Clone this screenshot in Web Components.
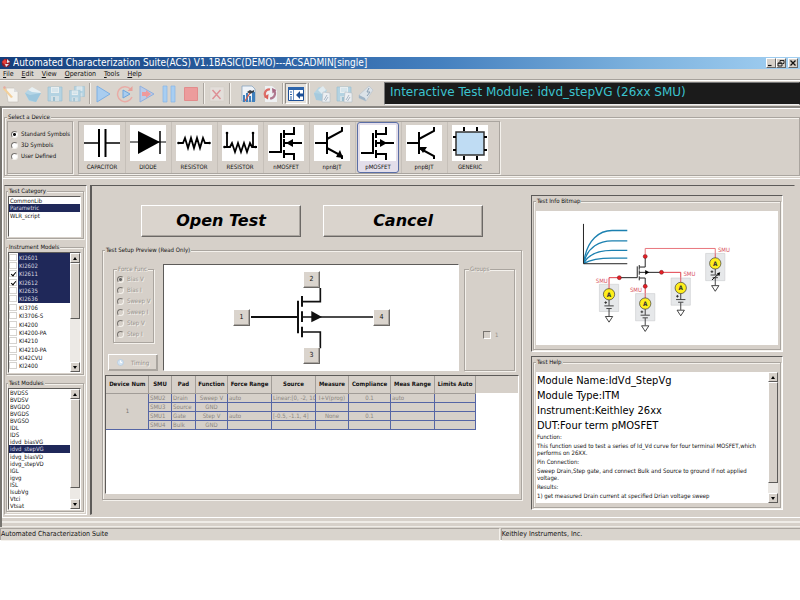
<!DOCTYPE html>
<html lang="en">
<head>
<meta charset="utf-8">
<title>Automated Characterization Suite</title>
<style>
  body {
    margin: 0;
    padding: 57px 0;
    background: #fff;
    font-family: "DejaVu Sans Condensed", "DejaVu Sans", sans-serif;
    font-size: 6px;
    line-height: 8px;
    color: #111;
    --face: #d6d0c9;
    --lite: #f4f1ec;
    --edge: #aaa59f;
    --dark: #5d5b59;
    --navy: #1f2859;
  }
</style>
</head>
<body>
<acs-window></acs-window>
<script>
const BASE = `*{box-sizing:border-box}button,input{font:inherit;color:inherit;margin:0}`;
const esc = s => s.replace(/&/g, '&amp;').replace(/</g, '&lt;');

/* Registers an element whose shadow tree comes from a template string or a function of the host. */
function define(name, css, html) {
  customElements.define(name, class extends HTMLElement {
    constructor() { super(); this.attachShadow({ mode: 'open' }); }
    connectedCallback() {
      const t = document.createElement('template');
      t.innerHTML = `<style>${BASE}${css}</style>` + (typeof html === 'function' ? html(this) : html);
      this.shadowRoot.replaceChildren(t.content.cloneNode(true));
    }
  });
}

/* ---------- title bar ---------- */
define('acs-titlebar', `
  :host{display:flex;align-items:center;height:12px;padding:0 2px 0 1px;gap:2px;color:#fff;font-size:10px;line-height:12px;
    background:linear-gradient(90deg,#153f7c 0%,#2f66a8 38%,#4580bf 55%,#7db2de 80%,#a3d0f2 100%)}
  svg{width:10px;height:10px;flex:none}
  h1{font:inherit;margin:0;flex:1;white-space:nowrap;overflow:hidden}
  button{width:10px;height:10px;padding:0;border:1px solid;border-color:#fff #666 #666 #fff;background:var(--face);display:block}
  .b{display:flex;flex:none}.b button:last-child{margin-left:2px}
  button svg{display:block;width:8px;height:8px}`, `
  <svg viewBox="0 0 10 10"><circle cx="5" cy="5" r="4.3" fill="#8d1c2a"/><path d="M1 4 4 1l2 3-2 3z" fill="#e8403a"/><path d="M6 1l3 3-3 1zM4 6l4 0-3 3z" fill="#dfe3ee"/></svg>
  <h1><slot></slot></h1>
  <div class="b">
    <button aria-label="Minimize"><svg viewBox="0 0 8 8"><path d="M1 6.5h3.5" stroke="#111" stroke-width="1.2"/></svg></button>
    <button aria-label="Restore"><svg viewBox="0 0 8 8"><path d="M3 1.5h4v3H5.5M1 4h4v3H1zM3 1.5v2M1 4.3h4" stroke="#111" fill="none" stroke-width=".9"/></svg></button>
    <button aria-label="Close"><svg viewBox="0 0 8 8"><path d="M1.5 1.5l5 5M6.5 1.5l-5 5" stroke="#111" stroke-width="1.3"/></svg></button>
  </div>`);

/* ---------- menu bar ---------- */
define('acs-menubar', `
  :host{display:flex;height:11px;gap:8px;padding:0 3px;font-size:7px;line-height:10px;background:#dad5ce;border-bottom:1px solid #a6a19b}
  button{border:0;background:none;padding:0}
  button::first-letter{text-decoration:underline}`,
  h => h.getAttribute('items').split(',').map(t => `<button>${t}</button>`).join(''));

/* ---------- toolbar icons ---------- */
const disk = `<path d="M2 2h14v14H2z" fill="#b4d3e2" stroke="#9cbfd0" stroke-width=".7"/><path d="M5 2h8v6H5z" fill="#e8eef0"/><path d="M5 11h8v5H5z" fill="#d2e0e6"/><path d="M7 12h2v4H7z" fill="#9cbfd0"/><path d="M6 4h6M6 6h6" stroke="#b4d3e2" stroke-width=".7"/>`;
const doc = `<path d="M10 7l7 1v9H9z" fill="#eceff2" stroke="#b4bcc4" stroke-width=".6"/><path d="M11 15l3-5M12.500 16l2.500-4" stroke="#9ab" stroke-width=".8"/>`;
const ICONS = {
  new: `<path d="M4 3h8l4 4v10H6z" fill="#f6f4f0" stroke="#c2beb7" stroke-width=".6"/><path d="M12 3v4h4" fill="#ddd"/><path d="M2 2l9 10-2 1L1 4z" fill="#f3cf9a"/><path d="M1 2l2-1 1 2-2 1z" fill="#e4a9a0"/>`,
  open: `<path d="M4 5l4-3 9 5-4 5z" fill="#e8f0f3"/><path d="M1 8l3-3 4 2 9 1-5 9-7-1z" fill="#b4d5e6"/><path d="M1 8l5 2 11-2-5 9-7-2z" fill="#9cc6dd"/>`,
  save: disk,
  saveall: `<g transform="translate(5 0) scale(.72)">${disk}</g><g transform="translate(0 4) scale(.76)">${disk}</g>`,
  play: `<path d="M3 1l13 8L3 17z" fill="#a9cdef" stroke="#7db0e4"/>`,
  loop: `<path d="M14.500 4A7.500 7.500 0 1 0 16 12" fill="none" stroke="#e9aca6" stroke-width="1.500"/><path d="M16.500 1v5h-5z" fill="#e9a09a"/><path d="M7 5l7 4-7 4z" fill="#a9cdef" stroke="#6fa5de"/>`,
  step: `<path d="M2 1l14 8-14 8z" fill="#b9cbe8" stroke="#90b0de"/><path d="M4 7h4V5l5 4-5 4v-2H4z" fill="#ee9a9c"/>`,
  pause: `<path d="M3 1h4v16H3zM11 1h4v16h-4z" fill="#a8cef1" stroke="#86b5e6" stroke-width=".7"/>`,
  stop: `<path d="M2.500 2.500h13v13h-13z" fill="#ec9c9c" stroke="#e28c8c"/>`,
  x: `<path d="M2 2h14v14H2z" fill="#e3deda" stroke="#d2ccc6" stroke-width=".5"/><path d="M4.500 5l8 9M12.500 5l-8 9" stroke="#dd8f95" stroke-width="1.400"/>`,
  chart: `<path d="M3 1h10l3 3v12H3z" fill="#eff3f8" stroke="#7c9cba" stroke-width=".7"/><path d="M4 10h2v7H4zM7 8h2v9H7zM10 11h2v6h-2zM13 7h3v10h-3z" fill="#3f80bd"/><path d="M8 7l3-2 2 1 2-1v2l-4 2z" fill="#384048"/><path d="M11 8L6 16" stroke="#d85a4a" stroke-width="1.200"/>`,
  refresh: `<path d="M4 1h7l5 4v12H4z" fill="#eef1f3"/><path d="M9 4.500A4.500 4.500 0 0 0 5 12" fill="none" stroke="#dc6f68" stroke-width="2.200"/><path d="M7 14.500L3 12l4.500-3z" fill="#dc5f58"/><path d="M9 13.500a5 5 0 0 0 4-8" fill="none" stroke="#b07a90" stroke-width="2.200"/><path d="M11 3l4.500 2-4 3.500z" fill="#a86a84"/>`,
  panel: `<path d="M1.500 2.500h15v13h-15z" fill="#fff" stroke="#1d4f96"/><path d="M1 2h16v3H1z" fill="#2c64ab"/><path d="M3 7h2M3 9.500h2M3 12h2M3 14h2" stroke="#2c64ab"/><path d="M6.500 5v10" stroke="#2c64ab" stroke-width=".7"/><path d="M13 6l-4 4 4 4v-2.500h3v-3h-3z" fill="#1d4f96"/>`,
  copy: `<path d="M1 8l5-6 8 3-4 8-8-1z" fill="#b4d3e2"/><path d="M1 8l8 1 1 4 0 3-7-1z" fill="#a5cade"/><path d="M5 5l5-4 3 4-4 4z" fill="#e0ebf0"/>${doc}`,
  savedoc: disk + doc,
  tag: `<path d="M2 10L12 1l4 4-7 11-7-3z" fill="#dbe2e8" stroke="#b6c0c9" stroke-width=".6"/><path d="M2 10l6 3 1 3-7-3z" fill="#9fb4c6"/><path d="M12 3l-2 4h3l-3 4" stroke="#8aa0b4" fill="none"/>`
};
define('tool-button', `
  :host{display:block;width:22px;height:21px}
  button{display:grid;place-items:center;width:100%;height:100%;padding:0;border:1px solid transparent;background:none}
  :host([pressed]) button{border-color:#8d8a86 #fff #fff #8d8a86;background:#e6e2dc}
  svg{width:18px;height:18px}`,
  h => `<button aria-label="${h.getAttribute('icon')}"><svg viewBox="0 0 18 18">${ICONS[h.getAttribute('icon')]}</svg></button>`);

define('tool-bar', `
  :host{display:flex;align-items:center;height:26px;background:#d9d4cd;border-top:1px solid #fff}
  ::slotted(i){width:2px;height:21px;margin:0 1px;border-left:1px solid #aaa59f;border-right:1px solid #f4f1ec;flex:none}
  ::slotted(tool-button){flex:none}
  ::slotted(.apart){margin-left:5px}
  ::slotted(lcd-readout){margin-left:7px;flex:1;min-width:0}`, `<slot></slot>`);

define('lcd-readout', `
  :host{display:block;height:23px;padding:0 5px;background:#1b1b1b;border:1px solid;border-color:#777 #1b1b1b #eee #777;
    color:#3cc3cf;font-family:"DejaVu Sans",sans-serif;font-size:12px;line-height:19px;white-space:nowrap;overflow:hidden}`, `<slot></slot>`);

/* ---------- group box ---------- */
define('group-box', `
  :host{display:block;min-width:0}
  fieldset{margin:0;min-width:0;height:100%;border:1px solid var(--edge);box-shadow:inset 1px 1px 0 var(--lite),1px 1px 0 var(--lite);padding:var(--pad,2px)}
  legend{padding:0 1px;margin:0;line-height:8px;font-size:6px;white-space:nowrap;background:var(--face)}
  :host([disabled]) legend{color:#918d88;text-shadow:1px 1px 0 #f4f1ec}`,
  h => `<fieldset><legend>${h.getAttribute('label')}</legend><slot></slot></fieldset>`);

/* ---------- radio list ---------- */
define('radio-list', `
  :host{display:flex;flex-direction:column;gap:var(--gap,2px)}
  label{display:flex;align-items:center;gap:3px;white-space:nowrap}
  input{appearance:none;width:7px;height:7px;border-radius:50%;border:1px solid;border-color:#77736f #f4f1ec #f4f1ec #77736f;background:#fff;flex:none}
  input:checked{background:radial-gradient(circle,#111 0 1px,#fff 2px)}
  :host([disabled]) label{color:#9a958f;text-shadow:1px 1px 0 #f4f1ec}
  :host([disabled]) input{background:var(--face)}
  :host([disabled]) input:checked{background:radial-gradient(circle,#666 0 1px,var(--face) 2px)}`,
  h => h.getAttribute('items').split(',').map((t, i) =>
    `<label><input type="radio" name="r"${i ? '' : ' checked'}${h.hasAttribute('disabled') ? ' disabled' : ''}>${t}</label>`).join(''));

/* ---------- device buttons ---------- */
const S = (w, d) => `<path d="${d}" fill="none" stroke="#000" stroke-width="${w}"/>`;
const DEVICES = {
  CAPACITOR: S(1.5, 'M0 18h15M21 18h15') + S(2, 'M15 4v28M21.500 4v28'),
  DIODE: S(1, 'M0 17h36') + S(1.5, 'M30 6v23') + `<path d="M8 6v23l22-12z"/>`,
  RESISTOR: S(1.800, 'M2 18h5l2-5 3 10 3-10 3 10 3-10 3 10 3-10 2 5h5') + `<circle cx="2.500" cy="18" r="1.300"/><circle cx="33.500" cy="18" r="1.300"/>`,
  'RESISTOR ': S(1.800, 'M2 22h6l2-4 3 9 3-9 3 9 3-9 3 9 3-9 2 4h5M5 22V8M31 22V8') + `<circle cx="2.500" cy="22" r="1.300"/><circle cx="33.500" cy="22" r="1.300"/><circle cx="5" cy="8" r="1.300"/><circle cx="31" cy="8" r="1.300"/>`,
  nMOSFET: S(2, 'M1 27h12V8M16 5v8M16 14v8M16 25v8M16 9h10V2M16 29h10v6M17 18h17') + `<path d="M18 18l7-4v8z"/>`,
  npnBJT: S(2, 'M1 18h12M13 7v22M13 14l15-8V2M13 23l15 8v3') + `<path d="M29 33l-7-1 4-7z"/>`,
  pMOSFET: S(2, 'M1 28h12V8M16 5v8M16 15v7M16 25v8M16 9h10V2M16 29h10v6M16 18h18') + `<path d="M27 18l-7-4v8z"/>`,
  pnpBJT: S(2, 'M1 18h12M13 7v22M13 14l15-8V2M13 23l15 8v3') + `<path d="M13 22l8 0-4 6z"/>`,
  GENERIC: `<path d="M4 7h28v23H4z" fill="#bfdcf3" stroke="#333" stroke-width="1.500"/>` + S(2, 'M12 2v4M25 2v4M12 31v4M25 31v4M1 12h3M1 25h3M32 12h3M32 25h3')
};
define('device-button', `
  :host{display:block;width:42px;flex:none}
  button{display:flex;flex-direction:column;align-items:center;width:100%;height:51px;padding:2px 0 0;border:1px solid transparent;border-radius:3px;background:none;white-space:nowrap;line-height:11px}
  :host([selected]) button{border-color:#5a6ea6;background:#e3deea}
  svg{width:36px;height:36px;background:#fff;flex:none}`,
  h => `<button><svg viewBox="0 0 36 36">${DEVICES[h.getAttribute('name') + (h.hasAttribute('alt') ? ' ' : '')]}</svg><span>${h.getAttribute('name')}</span></button>`);

define('device-picker', `
  :host{display:block;padding:5px 0 2px 2px;border-bottom:1px solid #fff}
  .row{display:flex;gap:5px;align-items:stretch}
  .well{border:1px solid var(--edge);box-shadow:1px 1px 0 var(--lite)}
  .kind{width:66px;padding:8px 2px 0 3px;flex:none;--gap:3px}
  .strip{display:flex;gap:2px;padding:0 8px 0 2px;min-width:0}
  .strip device-button + device-button{width:44px;padding-left:1px;border-left:1px solid #c6c0b9}`, `
  <group-box label="Select a Device" style="--pad:0 3px 1px 2px">
    <div class="row">
      <div class="well kind"><radio-list items="Standard Symbols,3D Symbols,User Defined"></radio-list></div>
      <div class="well strip">
        <device-button name="CAPACITOR"></device-button><device-button name="DIODE"></device-button>
        <device-button name="RESISTOR"></device-button><device-button name="RESISTOR" alt></device-button>
        <device-button name="nMOSFET"></device-button><device-button name="npnBJT"></device-button>
        <device-button name="pMOSFET" selected></device-button><device-button name="pnpBJT"></device-button>
        <device-button name="GENERIC"></device-button>
      </div>
    </div>
  </group-box>`);

/* ---------- scroll bar ---------- */
define('scroll-bar', `
  :host{display:flex;flex-direction:column;width:10px;background:#ece9e5;flex:none}
  button{height:10px;padding:0;flex:none;display:grid;place-items:center}
  button,div{border:1px solid;border-color:#fff #5d5b59 #5d5b59 #fff;background:var(--face)}
  span{flex:1}svg{width:4px;height:3px}`,
  h => `<button aria-label="Scroll up"><svg viewBox="0 0 4 3"><path d="M0 3h4L2 0z"/></svg></button>
  <div style="height:${h.getAttribute('thumb')}%"></div><span></span>
  <button aria-label="Scroll down"><svg viewBox="0 0 4 3"><path d="M0 0h4L2 3z"/></svg></button>`);

/* ---------- list box; rows share the height of the list equally ---------- */
define('list-box', `
  :host{display:flex;height:var(--h);background:#fff;border:1px solid;border-color:var(--dark) #fff #fff var(--dark);overflow:hidden}
  ul{list-style:none;margin:0;padding:0;flex:1;min-width:0;display:grid;height:var(--rows);grid-auto-rows:1fr}
  li{display:flex;align-items:center;gap:1px;padding-left:1px;line-height:7px;white-space:nowrap;min-height:0}
  li.on{background:var(--navy);color:#d8d8e0}
  .c li{padding:0}
  .c span{flex:1;align-self:stretch;display:flex;align-items:center;padding-left:1px}
  .c li.on{background:none}.c li.on span{background:var(--navy)}
  label{display:flex;flex:1;align-items:center;gap:1px;height:100%}
  input{appearance:none;width:8px;height:7px;border:1px solid #d5d3d0;background:#fff;flex:none;display:grid;place-items:center}
  input:checked::before{content:"";width:4px;height:2px;border:solid #000;border-width:0 0 1px 1px;transform:rotate(-50deg)}`,
  h => {
    const on = (h.getAttribute('selected') || '').split(','), ck = (h.getAttribute('ticked') || '').split(',');
    const checks = h.hasAttribute('ticked');
    return `<ul class="${checks ? 'c' : ''}">` + h.getAttribute('items').split(',').map(t =>
      `<li class="${on.includes(t) ? 'on' : ''}">` + (checks
        ? `<label><input type="checkbox"${ck.includes(t) ? ' checked' : ''}><span>${t}</span></label>` : t) + `</li>`).join('') +
      `</ul>` + (h.hasAttribute('thumb') ? `<scroll-bar thumb="${h.getAttribute('thumb')}"></scroll-bar>` : '');
  });

define('side-pane', `
  :host{display:flex;flex-direction:column;gap:4px;width:83px;flex:none;padding:1px 2px 2px 1px;border:1px solid;border-color:var(--dark) #fff #fff var(--edge);--pad:1px 2px 1px 1px}`, `
  <group-box label="Test Category"><list-box style="--h:41px;--rows:22px" items="CommonLib,Parametric,WLR_script" selected="Parametric"></list-box></group-box>
  <group-box label="Instrument Models"><list-box style="--h:121px;--rows:117px" thumb="47" ticked="KI2611,KI2612"
    selected="KI2601,KI2602,KI2611,KI2612,KI2635,KI2636"
    items="KI2601,KI2602,KI2611,KI2612,KI2635,KI2636,KI3706,KI3706-S,KI4200,KI4200-PA,KI4210,KI4210-PA,KI42CVU,KI2400"></list-box></group-box>
  <group-box label="Test Modules"><list-box style="--h:122px;--rows:120px" thumb="74" selected="idvd_stepVG"
    items="BVDSS,BVDSV,BVGDO,BVGDS,BVGSO,IDL,IDS,idvd_biasVG,idvd_stepVG,idvg_biasVD,idvg_stepVD,IGL,igvg,ISL,IsubVg,Vtci,Vtsat"></list-box></group-box>`);

/* ---------- push button ---------- */
define('push-button', `
  :host{display:block}
  button{display:flex;align-items:center;justify-content:center;gap:7px;width:100%;height:100%;padding:0;background:#dad4cd;border:1px solid;border-color:#fff #6b6865 #6b6865 #fff;box-shadow:inset -1px -1px 0 #aaa59f}
  button:disabled{color:#918d88;text-shadow:1px 1px 0 #f4f1ec;border-right-color:#aaa59f;border-bottom-color:#aaa59f}`,
  h => `<button${h.hasAttribute('disabled') ? ' disabled' : ''}><slot></slot></button>`);

/* ---------- device diagram with its terminals ---------- */
define('terminal-diagram', `
  :host{display:grid;place-items:center;background:#fff;border:1px solid;border-color:var(--dark) #fff #fff var(--dark);overflow:hidden;min-width:0}
  .stage{position:relative;width:297px;height:104px}
  svg{display:block;width:100%;height:100%}
  push-button{position:absolute;width:17px;height:17px;font-size:7px}`, `
  <div class="stage">
    <svg viewBox="204 210 891 312">
      <g fill="none" stroke="#111"><path d="M465 363H606" stroke-width="6"/><path d="M606 314v98" stroke-width="6"/>
      <path d="M618 300v32M618 346v32M618 392v32" stroke-width="6"/>
      <path d="M618 317H673V276M618 408H673V457M618 363H838" stroke-width="5"/></g>
      <path d="M646 345v34l32-16z" fill="#111"/>
    </svg>
    <push-button style="left:69px;top:43px">1</push-button>
    <push-button style="left:139px;top:5px">2</push-button>
    <push-button style="left:139px;top:81px">3</push-button>
    <push-button style="left:209px;top:43px">4</push-button>
  </div>`);

/* ---------- setup table ---------- */
define('setup-grid', `
  :host{display:block;background:#fff;border:1px solid;border-color:var(--dark) #fff #fff var(--dark);overflow:hidden}
  .head{background:linear-gradient(var(--face) 0 17px,transparent 17px)}
  table{border-collapse:collapse;table-layout:fixed;width:369px;background:var(--face)}
  th{height:17px;padding:0;border-right:1px solid #a19c97;border-bottom:1px solid #a19c97;font-weight:bold;white-space:nowrap}
  td{height:9px;padding:0 1px;border:1px solid #5565a5;line-height:8px;color:#8a8681;white-space:nowrap;overflow:hidden}
  td:first-child[rowspan]{border-color:#a19c97 #5565a5 #5565a5 transparent;color:#77736f}
  .m{text-align:center}`,
  () => {
    const cols = [['Device Num', 42], ['SMU', 23], ['Pad', 24], ['Function', 32], ['Force Range', 44], ['Source', 44], ['Measure', 33], ['Compliance', 42], ['Meas Range', 44], ['Limits Auto', 41]];
    const rows = [['SMU2', 'Drain', 'Sweep V', 'auto', 'Linear:[0, -2, 10', 'I+V(prog)', '0.1', 'auto', ''],
      ['SMU3', 'Source', 'GND', '', '', '', '', '', ''],
      ['SMU1', 'Gate', 'Step V', 'auto', '[-0.5, -1.1, 4]', 'None', '0.1', '', ''],
      ['SMU4', 'Bulk', 'GND', '', '', '', '', '', '']];
    const mid = [2, 5, 6];
    return `<div class="head"><table><colgroup>${cols.map(c => `<col style="width:${c[1]}px">`).join('')}</colgroup>
      <thead><tr>${cols.map(c => `<th>${c[0]}</th>`).join('')}</tr></thead><tbody>` +
      rows.map((r, i) => `<tr>${i ? '' : '<td rowspan="4" class="m">1</td>'}${r.map((t, j) => `<td class="${mid.includes(j) ? 'm' : ''}">${esc(t)}</td>`).join('')}</tr>`).join('') +
      `</tbody></table></div>`;
  });

define('setup-preview', `
  :host{display:block;min-width:0}
  .top{display:grid;grid-template-columns:50px minmax(0,1fr) 51px;gap:5px;height:107px;margin-bottom:4px;padding:0 4px 0 3px}
  .left{display:flex;flex-direction:column;justify-content:space-between;padding-top:1px}
  .left group-box{width:41px;height:78px;margin-left:5px;--pad:2px 2px 0 3px;--gap:3px}
  .left push-button{height:17px}
  .groups{padding-top:1px;display:grid;--pad:0 4px}
  .groups label{display:flex;align-items:center;gap:4px;padding:58px 0 0 14px;color:#918d88}
  .groups input{appearance:none;width:8px;height:8px;border:1px solid;border-color:#77736f #fff #fff #77736f}
  svg{width:7px;height:7px}
  setup-grid{height:119px}`, `
  <group-box label="Test Setup Preview (Read Only)" style="--pad:10px 2px 5px 2px">
    <div class="top">
      <div class="left">
        <group-box label="Force Func" disabled><radio-list disabled items="Bias V,Bias I,Sweep V,Sweep I,Step V,Step I"></radio-list></group-box>
        <push-button disabled><svg viewBox="0 0 7 7"><circle cx="3.500" cy="3.500" r="3" fill="#d4e4f2" stroke="#b3cadf" stroke-width=".7"/><path d="M3.500 1.500v2h1.500" stroke="#fff" fill="none"/></svg>Timing</push-button>
      </div>
      <terminal-diagram></terminal-diagram>
      <div class="groups"><group-box label="Groups" disabled><label><input type="checkbox" disabled>1</label></group-box></div>
    </div>
    <setup-grid></setup-grid>
  </group-box>`);

/* ---------- measurement circuit picture ---------- */
const smu = (x, y, variable) => `
  <path d="M${x - 29} ${y - 30}h58v82h-58z" fill="#e6e8ea" stroke="#c2c4c6" stroke-width="1.500"/>
  <path d="M${x} ${y - 30}v14" stroke="#e03c48" stroke-width="2.500"/>
  <path d="M${x} ${y + 16}v18M${x} ${y + 44}v22M${x - 14} ${y + 35}h28M${x - 8} ${y + 43}h16M${x - 14} ${y + 25}h8M${x - 10} ${y + 21}v8" stroke="#222" stroke-width="2.500" fill="none"/>
  ${variable ? `<path d="M${x - 10} ${y + 50}L${x + 12} ${y + 30}" stroke="#111" stroke-width="3"/><path d="M${x + 15} ${y + 27}l-3 10-7-7z"/>` : ''}
  <path d="M${x - 11} ${y + 67}h22l-11 17z" fill="#fff" stroke="#222" stroke-width="2.500"/>
  <circle cx="${x}" cy="${y}" r="17" fill="#ffee1c" stroke="#333" stroke-width="2"/>
  <text x="${x}" y="${y + 7}" text-anchor="middle" font-size="19" font-weight="bold" fill="#333">A</text>`;
define('circuit-bitmap', `
  :host{display:block;background:#fff}
  svg{display:block;width:100%;height:134px}`, `
  <svg viewBox="33 66 729 402" role="img" aria-label="Four terminal pMOSFET test circuit">
    <g fill="none" stroke="#1b80b0" stroke-width="4"><path d="M177 220C186 150 226 124 262 124H308"/><path d="M177 222C188 172 226 155 262 155H308"/><path d="M177 222C192 195 226 184 262 184H308"/><path d="M177 223C198 211 226 207 262 207H308"/></g>
    <path d="M176 104V224H308" fill="none" stroke="#222" stroke-width="3"/>
    <path d="M362 196V178H573V208" fill="none" stroke="#e8747c" stroke-width="3"/>
    <path d="M253 300V266H284M411 250H469V282M362 292V328" fill="none" stroke="#e03c48" stroke-width="3"/>
    <path d="M284 266H338V232M344 228v14M344 244v13M344 262v12M344 234H362V202M344 267H362V292M344 250H411" fill="none" stroke="#222" stroke-width="3"/>
    <path d="M362 243v14l12-7z"/>
    ${smu(253, 316)}${smu(362, 344)}${smu(469, 297)}${smu(573, 223, true)}
    <g fill="#e81e25" stroke="#6a1518" stroke-width="1.500"><circle cx="362" cy="202" r="6"/><circle cx="284" cy="266" r="6"/><circle cx="411" cy="250" r="6"/><circle cx="362" cy="292" r="6"/></g>
    <g font-size="18" fill="#d8525e"><text x="213" y="281">SMU</text><text x="316" y="309">SMU</text><text x="477" y="261">SMU</text><text x="581" y="190">SMU</text></g>
  </svg>`);

define('help-pane', `
  :host{display:flex;height:131px;background:#fff;overflow:hidden}
  div{flex:1;min-width:0;padding:1px 1px}
  h2{margin:0;font:inherit;font-size:11px;line-height:15px;color:#000;white-space:nowrap}
  p{margin:0 0 2px;line-height:7px}`, `
  <div><h2>Module Name:IdVd_StepVg</h2><h2>Module Type:ITM</h2><h2>Instrument:Keithley 26xx</h2><h2>DUT:Four term pMOSFET</h2>
  <p>Function:</p><p>This function used to test a series of Id_Vd curve for four terminal MOSFET,which performs on 26XX.</p>
  <p>Pin Connection:</p><p>Sweep Drain,Step gate, and connect Bulk and Source to ground if not applied voltage.</p>
  <p>Results:</p><p>1) get measured Drain current at specified Drian voltage sweep</p></div>
  <scroll-bar thumb="77"></scroll-bar>`);

define('main-pane', `
  :host{display:grid;grid-template-columns:minmax(0,5fr) minmax(0,3fr);gap:9px;flex:1;min-width:0;padding:9px 11px 2px 10px;border:1px solid;border-color:var(--dark) transparent transparent var(--dark);border-left-width:2px}
  .left{display:flex;flex-direction:column;gap:9px;min-width:0}
  .go{display:grid;grid-template-columns:160px 160px;justify-content:center;gap:22px;padding:10px 0 0;font:oblique bold 16px/30px "DejaVu Sans",sans-serif;color:#000}
  .go push-button{height:32px}
  .right{display:flex;flex-direction:column;gap:4px;min-width:0}
  .right group-box{border:1px solid;border-color:var(--dark) #fff #fff var(--dark);padding:1px}
  .right{--pad:6px 2px 4px 2px}`, `
  <div class="left">
    <div class="go"><push-button>Open Test</push-button><push-button>Cancel</push-button></div>
    <setup-preview></setup-preview>
  </div>
  <div class="right">
    <group-box label="Test Info Bitmap"><circuit-bitmap></circuit-bitmap></group-box>
    <group-box label="Test Help"><help-pane></help-pane></group-box>
  </div>`);

define('status-bar', `
  :host{display:grid;grid-template-columns:5fr 3fr;gap:2px;height:13px;font-size:7px;line-height:11px;padding:1px 0;background:#d9d4cd}
  ::slotted(span){border-top:1px solid var(--edge);border-left:1px solid var(--edge);box-shadow:1px 1px 0 var(--lite);white-space:nowrap}`, `<slot></slot>`);

define('acs-window', `
  :host{display:block;background:var(--face)}
  .work{border-left:2px solid #77746f;border-top:2px solid #8a8783;box-shadow:inset 1px 1px 0 #fff}
  .panes{display:flex;gap:3px;padding:0 5px 0 2px;margin-top:6px}
  .ribs{height:10px;margin-top:2px;border-top:1px solid #fff;background:repeating-linear-gradient(#d6d0c9 0 3px,#efece7 3px 5px)}`, `
  <acs-titlebar>Automated Characterization Suite(ACS) V1.1BASIC(DEMO)---ACSADMIN[single]</acs-titlebar>
  <acs-menubar items="File,Edit,View,Operation,Tools,Help"></acs-menubar>
  <tool-bar>
    <tool-button icon="new"></tool-button><tool-button icon="open"></tool-button><tool-button icon="save"></tool-button><tool-button icon="saveall"></tool-button><i></i>
    <tool-button icon="play"></tool-button><tool-button icon="loop"></tool-button><tool-button icon="step"></tool-button><tool-button icon="pause"></tool-button><tool-button icon="stop"></tool-button><i></i>
    <tool-button icon="x"></tool-button><i></i>
    <tool-button class="apart" icon="chart"></tool-button><tool-button icon="refresh"></tool-button><i></i>
    <tool-button icon="panel" pressed></tool-button><i></i>
    <tool-button icon="copy"></tool-button><tool-button icon="savedoc"></tool-button><tool-button icon="tag"></tool-button>
    <lcd-readout>Interactive Test Module: idvd_stepVG (26xx SMU)</lcd-readout>
  </tool-bar>
  <div class="work">
    <device-picker></device-picker>
    <div class="panes"><side-pane></side-pane><main-pane></main-pane></div>
    <div class="ribs"></div>
  </div>
  <status-bar><span>Automated Characterization Suite</span><span>Keithley Instruments, Inc.</span></status-bar>`);
</script>
</body>
</html>
